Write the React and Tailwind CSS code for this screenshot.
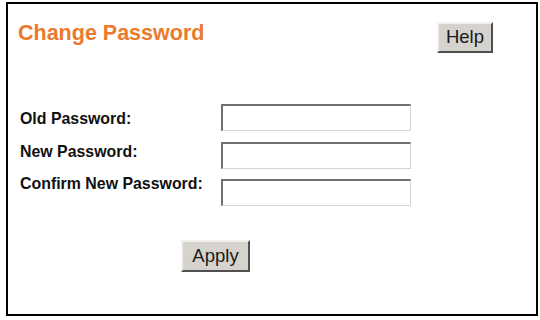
import React from 'react'

// Classic router-style "Change Password" panel
const font = { fontFamily: '"Liberation Sans", Arial, sans-serif' }

const fields = ['Old Password:', 'New Password:', 'Confirm New Password:']

function ClassicButton({ children, className = '' }) {
  return (
    <button
      className={`bg-[#d6d3ce] border-2 border-t-[#f2f0ec] border-l-[#f2f0ec] border-r-[#505050] border-b-[#505050] text-[18.5px] leading-none text-[#1a1a1a] flex items-center justify-center ${className}`}
    >
      {children}
    </button>
  )
}

export default function App() {
  return (
    <div className="w-[540px] h-[320px] bg-white pt-[2px] pl-[6px]" style={font}>
      <div className="w-[532px] h-[314px] border-[2.5px] border-black bg-white">
        {/* Header */}
        <div className="flex items-start justify-between pl-[10px] pr-[43px] pt-[18px]">
          <h1 className="mt-[1px] text-[21.5px] leading-[20px] font-bold text-[#ec7a2c]">Change Password</h1>
          <ClassicButton className="w-[56px] h-[31px]">Help</ClassicButton>
        </div>

        {/* Form */}
        <div className="flex items-start mt-[51px]">
          <div className="ml-[12px] w-[201px] mt-[7px] flex flex-col gap-[16.5px]">
            {fields.map((f) => (
              <div key={f} className="text-[15.9px] leading-[16px] font-bold text-[#111] whitespace-nowrap">
                {f}
              </div>
            ))}
          </div>
          <div className="flex flex-col gap-[10.5px]">
            {fields.map((f) => (
              <input
                key={f}
                type="password"
                className="w-[190px] h-[27px] bg-white border-t-2 border-l-2 border-r border-b border-t-[#707070] border-l-[#707070] border-r-[#d4d4d4] border-b-[#d4d4d4] outline-none"
              />
            ))}
          </div>
        </div>

        {/* Apply */}
        <div className="mt-[34px] ml-[173px]">
          <ClassicButton className="w-[69px] h-[32px]">Apply</ClassicButton>
        </div>
      </div>
    </div>
  )
}
